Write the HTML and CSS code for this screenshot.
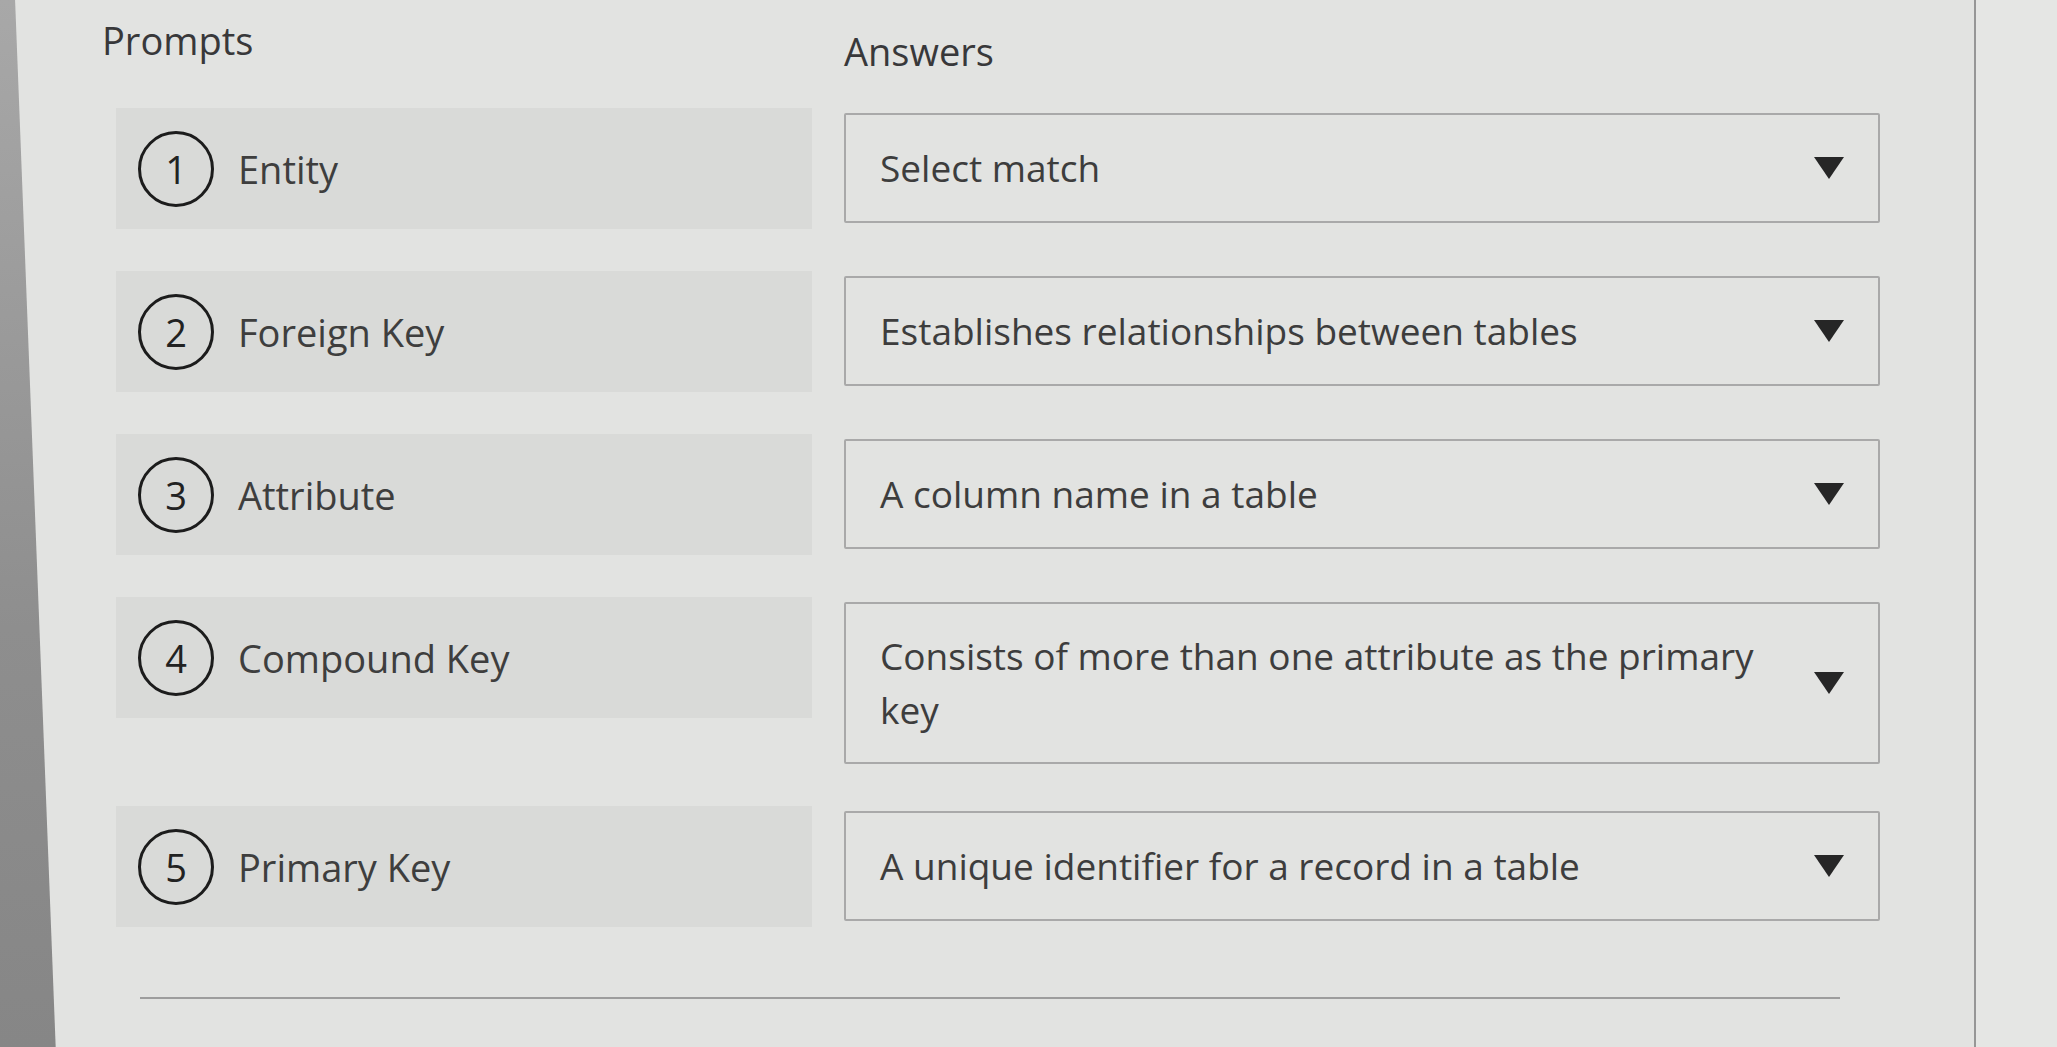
FILE: index.html
```html
<!DOCTYPE html>
<html lang="en">
<head>
<meta charset="utf-8">
<title>Matching</title>
<link rel="stylesheet" href="styles.css">
</head>
<body>
<div class="screen">
  <div class="bezel"></div>
  <main class="panel">
    <div class="matching">
      <div class="head head-prompts">Prompts</div>
      <div class="head head-answers">Answers</div>

      <div class="prompt"><span class="num">1</span><span class="label">Entity</span></div>
      <div class="select"><span class="value">Select match</span><span class="caret"></span></div>

      <div class="prompt"><span class="num">2</span><span class="label">Foreign Key</span></div>
      <div class="select"><span class="value">Establishes relationships between tables</span><span class="caret"></span></div>

      <div class="prompt"><span class="num">3</span><span class="label">Attribute</span></div>
      <div class="select"><span class="value">A column name in a table</span><span class="caret"></span></div>

      <div class="prompt"><span class="num">4</span><span class="label">Compound Key</span></div>
      <div class="select"><span class="value">Consists of more than one attribute as the primary key</span><span class="caret"></span></div>

      <div class="prompt"><span class="num">5</span><span class="label">Primary Key</span></div>
      <div class="select"><span class="value">A unique identifier for a record in a table</span><span class="caret"></span></div>
    </div>
    <div class="divider"></div>
  </main>
  <div class="margin"></div>
</div>
</body>
</html>
```

FILE: styles.css
```css
* { box-sizing: border-box; }

html, body {
  margin: 0;
  padding: 0;
  background: #e2e3e1;
}

body {
  font-family: "Open Sans", "Noto Sans", "Liberation Sans", sans-serif;
  color: #3b3b3b;
}

.screen {
  display: flex;
  width: 2057px;
  height: 1047px;
  overflow: hidden;
}

.bezel {
  flex: 0 0 58px;
  background: linear-gradient(180deg, #a8a8a8 0%, #8e8e8e 60%, #868686 100%);
  clip-path: polygon(0 0, 26% 0, 96% 100%, 0 100%);
}

.panel {
  flex: 0 0 1918px;
  border-right: 2px solid #969696;
  background: #e2e3e1;
  padding-left: 44px;
}

.margin {
  flex: 1;
  background: #e5e6e4;
}

.matching {
  display: grid;
  grid-template-columns: 710px 1036px;
  column-gap: 32px;
  row-gap: 42px;
  align-items: start;
}

.head {
  font-size: 38px;
  line-height: 52px;
  color: #38383a;
}

.head-prompts {
  margin-top: 14px;
}

.head-answers {
  margin-top: 25px;
  margin-bottom: -11px;
}

.prompt {
  margin-left: 14px;
  height: 121px;
  background: #d9dad8;
  display: flex;
  align-items: center;
  padding-left: 22px;
}

.num {
  flex: 0 0 76px;
  width: 76px;
  height: 76px;
  border: 3.5px solid #1c1c1c;
  border-radius: 50%;
  display: flex;
  align-items: center;
  justify-content: center;
  font-size: 38px;
  color: #222222;
}

.label {
  margin-left: 24px;
  font-size: 38px;
  color: #3e3e3e;
}

.select {
  margin-top: 5px;
  min-height: 110px;
  border: 2px solid #a9a9a9;
  border-radius: 2px;
  display: flex;
  align-items: center;
  gap: 30px;
  padding: 25px 34px 25px 34px;
}

.value {
  flex: 1;
  font-size: 37px;
  line-height: 54px;
  color: #3d3d3d;
}

.caret {
  flex: 0 0 30px;
  width: 0;
  height: 0;
  border-left: 15px solid transparent;
  border-right: 15px solid transparent;
  border-top: 22px solid #262626;
}

.divider {
  margin: 70px 0 0 38px;
  width: 1700px;
  height: 2px;
  background: #9d9d9d;
}
```
